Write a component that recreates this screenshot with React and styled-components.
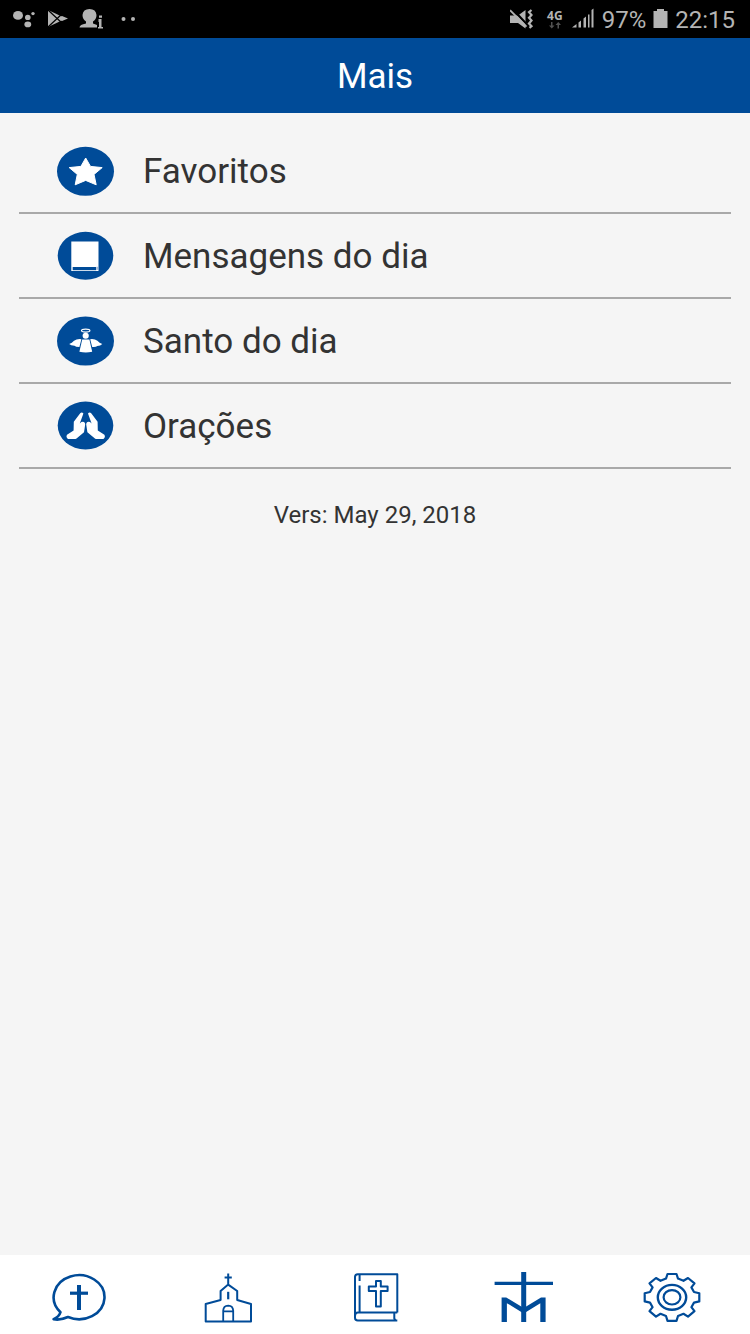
import React, { useState } from 'react'
import styled, { createGlobalStyle } from 'styled-components'

let colors = {
    primary: `#004b98`,
    background: `#f5f5f5`,
    text: `#333333`,
    line: `#a9a9a9`,
    status: `#b4b4b4`,
}

let StarIcon = () => (
    <ItemImage viewBox="0 0 58 50" aria-hidden="true">
        <ellipse cx="28.5" cy="25.3" rx="28.5" ry="24.5" />
        <path fill="#fff" stroke="#fff" strokeLinejoin="round" d="M28.7 12 33.5 20.4 45.2 21.6 37 28.4 39.2 38.8 28.7 34.4 18.2 38.8 20.3 28.4 12.2 21.6 23.9 20.4Z" />
    </ItemImage>
)

let BookIcon = () => (
    <ItemImage viewBox="0 0 58 50" aria-hidden="true">
        <ellipse cx="28.5" cy="24.8" rx="27.8" ry="24" />
        <rect x="14.3" y="10.5" width="27.2" height="29.5" fill="#fff" />
        <path d="M15.7 36H39.2V39.2H15.7Z" />
        <path d="M40.2 35.8V38.8" stroke="#7f9fc8" />
    </ItemImage>
)

let AngelIcon = () => (
    <ItemImage viewBox="0 0 58 50" aria-hidden="true">
        <ellipse cx="28.5" cy="25" rx="28.5" ry="24.5" />
        <ellipse cx="28.7" cy="14.6" rx="4.2" ry="1.5" fill="none" stroke="#fff" strokeWidth="1.2" />
        <g fill="#fff">
            <ellipse cx="28.7" cy="19.8" rx="3.1" ry="3" />
            <path d="M25.2 23.4H32.4L35.2 35.8Q28.7 37.4 22.4 35.8Z" />
            <path d="M24.4 23.2 22.4 31Q18.5 31 17.5 29.8Q13.8 29.6 12.2 28Q15 27 17 24.8Q20 22.6 24.4 23.2Z" />
            <path d="M33.2 23.2 35.2 31Q39 31.4 40.3 30Q43.5 29.8 45.3 28Q42.4 27 40.4 24.8Q37.5 22.6 33.2 23.2Z" />
        </g>
    </ItemImage>
)

let PrayIcon = () => (
    <ItemImage viewBox="0 0 58 50" aria-hidden="true">
        <ellipse cx="28.5" cy="24.6" rx="27.8" ry="24" />
        <g fill="#fff">
            <path id="hand" d="M23.2 12.2Q25 10.8 26.4 12.6L22.8 22.4 24.4 21Q28 19.8 28.2 23.6L27 31.2 19.5 37.4Q18.6 38 17.4 38H11Q8.6 36.4 10 33.8L16.6 29.6 16.8 20.8Z" />
            <use href="#hand" transform="translate(57.4 0) scale(-1 1)" />
        </g>
    </ItemImage>
)

let BubbleIcon = () => (
    <TabImage viewBox="0 0 60 52" aria-hidden="true">
        <path strokeWidth="2.6" d="M12.5 41.2A25.4 22 0 1 1 20 46Q12 49.6 5.6 48.2Q11 46 12.5 41.2Z" />
        <path strokeWidth="4" d="M31 14V39" />
        <path strokeWidth="3.2" d="M22 22.2H40" />
    </TabImage>
)

let ChurchIcon = () => (
    <TabImage viewBox="0 0 60 52" aria-hidden="true">
        <path strokeWidth="2" d="M8.7 50.5V33L23.6 29V20L31.2 13.6 40.2 20V29L54 33V50.5ZM31.2 2.5V13.6M27.6 6.5H34.8" />
        <path strokeWidth="2.2" d="M31.2 20.8V28.3" />
        <path strokeWidth="1.8" d="M26.2 50.5V39.6Q26.4 34.8 31.2 34.6 36 34.8 36.2 39.6V50.5M26.2 40.3H36.2" />
    </TabImage>
)

let BibleIcon = () => (
    <TabImage viewBox="0 0 60 52" aria-hidden="true">
        <path strokeWidth="2" d="M52.3 41.5V3.2H12.8Q10 3.2 10 6V46.8Q10 49.6 12.8 49.6H52.3M52.3 41.5H13Q10 41.5 10 45.5M14.6 3.2V10M14.6 14.5V41.5M49.3 41.5V47.5L50.5 49.6" />
        <path strokeWidth="2" d="M31 10H35.8V15.6H42.6V20H35.8V35.4H31V20H23.8V15.6H31Z" />
    </TabImage>
)

let MarianIcon = () => (
    <TabImage viewBox="0 0 60 52" aria-hidden="true">
        <path strokeWidth="3.2" d="M1.6 12.4H60" />
        <path strokeWidth="5" d="M30.7 1V51" />
        <path stroke="none" fill={colors.primary} d="M8.6 51V26.4H13.2L30.7 37 48 26.4H52.6V51H47.3V32.2L30.7 42.4 13.9 32.2V51Z" />
    </TabImage>
)

let GearIcon = () => (
    <TabImage viewBox="0 0 60 52" aria-hidden="true">
        <path
            strokeWidth="2.2"
            d="M25.5 3H34.5L36 7.6 41.5 9.8 46 7 52.5 12.4 49.4 16.4 52 21 57.3 22.2V30.4L52 31.6 49.4 36.2 52.5 40.2 46 45.6 41.5 42.8 36 45 34.5 49.8H25.5L24 45 18.5 42.8 14 45.6 7.5 40.2 10.6 36.2 8 31.6 2.7 30.4V22.2L8 21 10.6 16.4 7.5 12.4 14 7 18.5 9.8 24 7.6Z"
        />
        <ellipse cx="30" cy="26.3" rx="14.2" ry="12.4" strokeWidth="2.4" />
        <ellipse cx="30" cy="26.3" rx="8.4" ry="7.2" strokeWidth="2.2" />
    </TabImage>
)

let items = [
    { title: `Favoritos`, icon: StarIcon },
    { title: `Mensagens do dia`, icon: BookIcon },
    { title: `Santo do dia`, icon: AngelIcon },
    { title: `Orações`, icon: PrayIcon },
]

let tabs = [
    { label: `Mensagens`, icon: BubbleIcon },
    { label: `Igreja`, icon: ChurchIcon },
    { label: `Bíblia`, icon: BibleIcon },
    { label: `Comunidade`, icon: MarianIcon },
    { label: `Mais`, icon: GearIcon },
]

let Notifications = () => (
    <StatusImage width="126" height="24" viewBox="0 0 126 24" aria-hidden="true">
        <ellipse cx="6" cy="8.4" rx="5" ry="4.4" />
        <ellipse cx="15.8" cy="10.4" rx="2.8" ry="2.6" />
        <circle cx="21" cy="6.6" r="1.7" />
        <ellipse cx="15.8" cy="17.4" rx="3.4" ry="2.8" />
        <path d="M36 3V20L54 11.5Z" />
        <path d="M36 3 50 16M36 20 50 7" stroke="#000" strokeWidth="1.2" />
        <path d="M50 9 56 11.5 50 14 47 11.5Z" />
        <path d="M70.5 8Q71 2 77.5 2 84 2 84.5 8 84.5 12 81 14.5V16.5L85 18V20.5H67.5Q67.5 17.5 74 16.5V14.5Q70.5 12 70.5 8Z" />
        <path d="M86.5 12H89.5V20H91V21.5H86V20H87V15H86.5ZM87 8.5H90V10.7H87Z" />
        <circle cx="111.5" cy="12" r="2" />
        <circle cx="121" cy="12" r="2" />
    </StatusImage>
)

let MutedIcon = () => (
    <StatusImage width="26" height="24" viewBox="0 0 26 24" aria-hidden="true">
        <path d="M0 8.5H8L15.5 3V21.5L8 16H0Z" />
        <path d="M2 1.5 18 18.5" stroke="#000" strokeWidth="2.2" />
        <path d="M0 3.2 16.5 19.6" stroke={colors.status} strokeWidth="1.8" />
        <path d="M21.5 3 19 5.2 21.5 8 19 10.8 21.5 13.6 19 16.4 21.5 19.2 19.5 20.8" fill="none" stroke={colors.status} strokeWidth="2.2" />
    </StatusImage>
)

let SignalIcon = () => (
    <StatusImage width="24" height="24" viewBox="0 0 24 24" aria-hidden="true">
        <path d="M1 20.5 5.5 17V20.5ZM7.5 15.5 10 13.5V20.5H7.5ZM12.5 11.5 15 9.5V20.5H12.5ZM17 7.5H18.5V20.5H17ZM20.5 3 22.5 1.5V20.5H20.5Z" />
    </StatusImage>
)

let BatteryIcon = () => (
    <StatusImage width="15" height="24" viewBox="0 0 15 24" aria-hidden="true">
        <path d="M4 2H11V4H14.5V21H0.5V4H4Z" />
    </StatusImage>
)

let ArrowsIcon = () => (
    <StatusImage width="14" height="7" viewBox="0 0 14 7" aria-hidden="true">
        <path d="M3 0H4.5V3.5H6.5L3.75 6.5 1 3.5H3ZM9.5 6.5H11V3H13L10.25 0 7.5 3H9.5Z" opacity="0.45" />
    </StatusImage>
)

let App = () => {
    let [current, set_current] = useState(4)
    return (
        <Page>
            <GlobalStyle />
            <StatusBar>
                <Notifications />
                <StatusGroup>
                    <MutedIcon />
                    <Network>
                        4G
                        <ArrowsIcon />
                    </Network>
                    <SignalIcon />
                    <StatusText>97%</StatusText>
                    <BatteryIcon />
                    <StatusText>22:15</StatusText>
                </StatusGroup>
            </StatusBar>
            <Header>
                <Title>Mais</Title>
            </Header>
            <Content>
                <List>
                    {
                        items.map(({ title, icon: Icon }) => (
                            <li key={title}>
                                <Item href="#">
                                    <Icon />
                                    <ItemTitle>{title}</ItemTitle>
                                </Item>
                            </li>
                        ))
                    }
                </List>
                <Version>Vers: May 29, 2018</Version>
            </Content>
            <TabBar>
                {
                    tabs.map(({ label, icon: Icon }, index) => (
                        <Tab
                            key={label}
                            type="button"
                            aria-label={label}
                            aria-current={current === index ? `page` : undefined}
                            onClick={() => { set_current(index) }}
                        >
                            <Icon />
                        </Tab>
                    ))
                }
            </TabBar>
        </Page>
    )
}

const GlobalStyle = createGlobalStyle`
* {
    box-sizing: border-box;
}
body {
    margin: 0;
    background-color: ${colors.background};
    color: ${colors.text};
    font-family: Roboto, "Liberation Sans", sans-serif;
}`

const Page = styled.div`
display: flex;
flex-direction: column;
min-height: 100vh;
`

const StatusBar = styled.div`
display: flex;
align-items: center;
justify-content: space-between;
height: 38px;
padding: 0 15px 0 12px;
background-color: #000000;
color: ${colors.status};
`

const StatusGroup = styled.div`
display: flex;
align-items: center;
gap: 7px;
`

const StatusImage = styled.svg`
display: block;
flex: none;
fill: ${colors.status};
`

const StatusText = styled.span`
padding-top: 2px;
font-size: 24px;
line-height: 28px;
`

const Network = styled.span`
display: flex;
flex-direction: column;
align-items: center;
gap: 1px;
padding: 0 1px 0 4px;
font-family: "Open Sans", sans-serif;
font-size: 12px;
font-weight: 700;
line-height: 11px;
`

const Header = styled.header`
display: flex;
align-items: center;
justify-content: center;
height: 75px;
background-color: ${colors.primary};
color: #ffffff;
`

const Title = styled.h1`
margin: 0;
padding-top: 2px;
font-size: 35px;
font-weight: 400;
line-height: 40px;
`

const Content = styled.main`
flex: 1;
padding: 16px 19px;
`

const List = styled.ul`
margin: 0;
padding: 0;
list-style: none;
`

const Item = styled.a`
display: flex;
align-items: center;
gap: 28px;
height: 85px;
padding-left: 38px;
border-bottom: 2px solid ${colors.line};
color: ${colors.text};
text-decoration: none;
`

const ItemTitle = styled.span`
padding-top: 2px;
font-size: 35px;
line-height: 40px;
`

const ItemImage = styled.svg`
flex: none;
width: 58px;
height: 50px;
fill: ${colors.primary};
`

const Version = styled.p`
margin: 32px 0 0;
font-size: 24px;
line-height: 28px;
text-align: center;
`

const TabBar = styled.nav`
display: flex;
height: 79px;
padding: 5px 4px 0;
background-color: #ffffff;
`

const Tab = styled.button`
display: flex;
flex: 1;
align-items: center;
justify-content: center;
padding: 0;
border: 0;
background: none;
cursor: pointer;
`

const TabImage = styled.svg`
width: 60px;
height: 52px;
fill: none;
stroke: ${colors.primary};
stroke-linejoin: round;
`

export default App
